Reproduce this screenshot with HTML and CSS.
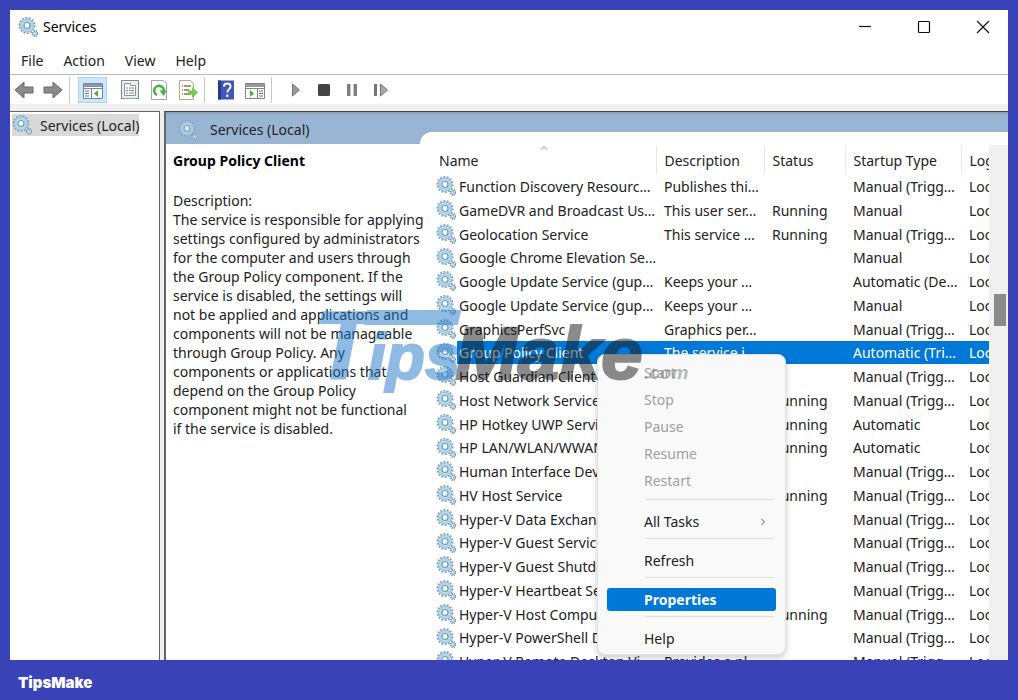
FILE: index.html
```
<!DOCTYPE html>
<html lang="en">
<head>
  <meta charset="UTF-8" />
  <meta name="viewport" content="width=device-width, initial-scale=1.0" />
  <title>Services</title>
  <link rel="stylesheet" href="styles.css">
</head>
<body>
  <!-- shared gear icon -->
  <svg class="defs" aria-hidden="true">
    <symbol id="gear" viewBox="0 0 20 20">
      <circle cx="9" cy="8.5" r="7.6" fill="none" stroke="#7f9db3" stroke-width="1.8" stroke-dasharray="1.9 1.5"/>
      <circle cx="9" cy="8.5" r="5" fill="none" stroke="#b4d6e8" stroke-width="4"/>
      <circle cx="9" cy="8.5" r="6.6" fill="none" stroke="#8db8d3" stroke-width="0.8"/>
      <circle cx="9" cy="8.5" r="3" fill="#fbfdfe" stroke="#6a9cc0" stroke-width="1.2"/>
      <circle cx="17" cy="16.5" r="2.6" fill="#d3e8f3" stroke="#7393aa" stroke-width="1.8" stroke-dasharray="1.2 0.9"/>
      <circle cx="17" cy="16.5" r="1.1" fill="#fff" stroke="#8db9d4" stroke-width="0.8"/>
    </symbol>
  </svg>

  <main class="window">
    <header class="titlebar">
      <svg class="gear"><use href="#gear"/></svg>
      <h1>Services</h1>
      <div class="controls">
        <button aria-label="Minimize"><svg viewBox="0 0 14 14"><path d="M1 6.500h12"/></svg></button>
        <button aria-label="Maximize"><svg viewBox="0 0 14 14"><rect x="1.5" y="1.5" width="11" height="11" rx="1"/></svg></button>
        <button aria-label="Close"><svg viewBox="0 0 14 14"><path d="M1 1l12 12M13 1L1 13"/></svg></button>
      </div>
    </header>

    <nav class="menubar">
      <button>File</button>
      <button>Action</button>
      <button>View</button>
      <button>Help</button>
    </nav>

    <div class="toolbar">
      <button class="tool" aria-label="Back"><svg viewBox="0 0 20 20"><path d="M1 10l9-8v5h9v6h-9v5z" fill="#8b8b8b" stroke="#666"/></svg></button>
      <button class="tool next" aria-label="Forward"><svg viewBox="0 0 20 20"><path d="M19 10l-9-8v5H1v6h9v5z" fill="#8b8b8b" stroke="#666"/></svg></button>
      <span class="divider"></span>
      <button class="tool active" aria-label="Show/Hide Console Tree">
        <svg viewBox="0 0 20 20"><path d="M.5 3.5h19v15H.5z" fill="#fff" stroke="#7b8794"/><path d="M1 4h18v3H1z" fill="#8b98a6"/><path d="M0 8.5h20M8.5 9v10" stroke="#7b8794"/><path d="M2 11h4M2 13.5h4M2 16h4" stroke="#5377a8"/><path d="M15 10v7l-4-3.500z" fill="#55a83a"/></svg>
      </button>
      <button class="tool" aria-label="Properties">
        <svg viewBox="0 0 20 20"><path d="M1.500.500h17v18h-17z" fill="#eee" stroke="#858585"/><path d="M4.500 3.500h6v2h5v10h-11z" fill="#fff" stroke="#8c96a0"/><path d="M6 8h2m1 0h5M6 10.500h2m1 0h5M6 13h2m1 0h5" stroke="#7f8d9c"/><path d="M4 18.500h12" stroke="#88a6b5"/></svg>
      </button>
      <button class="tool" aria-label="Refresh">
        <svg viewBox="0 0 20 20"><path d="M2.500.500h12l3 3v16h-15z" fill="#fff" stroke="#a8a8a8"/><path d="M8 15A4.800 4.800 0 1 1 14.800 11" fill="none" stroke="#4caf43" stroke-width="2.600"/><path d="M10.500 10.500h7.500l-3.500 5.500z" fill="#4caf43"/></svg>
      </button>
      <button class="tool" aria-label="Export List">
        <svg viewBox="0 0 20 20"><path d="M1.500.500h11l3 3v16h-14z" fill="#fffef5" stroke="#b2ad98"/><path d="M4 6h1m1 0h7M4 10h1m1 0h5M4 14h1m1 0h7" stroke="#77776b" stroke-width="1.400"/><path d="M10 10.500h4V7l6 5.500-6 5.500v-3.500h-4z" fill="#74cc45"/></svg>
      </button>
      <span class="divider wide"></span>
      <button class="tool" aria-label="Help">
        <svg viewBox="0 0 20 20"><path d="M2 .500h16v19H2z" fill="#3e58b8"/><path d="M2 .500h3v19H2z" fill="#263b88"/><path d="M8 6.500c0-4 6.500-4 6.500 0 0 3-3.200 2.500-3.200 6M11.300 14.500v2.500" fill="none" stroke="#fff" stroke-width="2"/></svg>
      </button>
      <button class="tool" aria-label="Show/Hide Action Pane">
        <svg viewBox="0 0 20 20"><path d="M.5 3.500h19v15H.5z" fill="#fff" stroke="#858585"/><path d="M1 4h18v3H1z" fill="#9a9a9a"/><path d="M0 8.500h20M12.500 9v10" stroke="#858585"/><path d="M14 11h4M14 13.500h4M14 16h4" stroke="#5377a8"/><path d="M5 10v7l4-3.500z" fill="#55a83a"/></svg>
      </button>
      <span class="divider"></span>
      <div class="playback">
        <button class="tool" aria-label="Start Service"><svg viewBox="0 0 20 20"><path d="M6.500 4v12l7-6z" fill="#999" stroke="#777"/></svg></button>
        <button class="tool" aria-label="Stop Service"><svg viewBox="0 0 20 20"><rect x="4" y="4" width="12" height="12" rx="1.500" fill="#444"/></svg></button>
        <button class="tool" aria-label="Pause Service"><svg viewBox="0 0 20 20"><path d="M5 4h3.500v12H5zM11.500 4H15v12h-3.500z" fill="#808080"/></svg></button>
        <button class="tool" aria-label="Restart Service"><svg viewBox="0 0 20 20"><path d="M4 4h3v12H4z" fill="#777"/><path d="M10.500 4v12l7-6z" fill="#aaa" stroke="#777"/></svg></button>
      </div>
    </div>

    <div class="panes">
      <aside class="tree">
        <a href="#services" class="tree-item"><svg class="gear"><use href="#gear"/></svg><span>Services (Local)</span></a>
      </aside>

      <section class="content" id="services">
        <div class="details">
          <div class="details-head"><svg class="gear"><use href="#gear"/></svg><span>Services (Local)</span></div>
          <div class="details-body">
            <h2>Group Policy Client</h2>
            <p>Description:<br>
              The service is responsible for applying<br>
              settings configured by administrators<br>
              for the computer and users through<br>
              the Group Policy component. If the<br>
              service is disabled, the settings will<br>
              not be applied and applications and<br>
              components will not be manageable<br>
              through Group Policy. Any<br>
              components or applications that<br>
              depend on the Group Policy<br>
              component might not be functional<br>
              if the service is disabled.</p>
          </div>
        </div>

        <div class="list">
          <table>
            <thead>
              <tr>
                <th class="col-name">Name<svg class="sort" viewBox="0 0 8 4"><path d="M1 3.500l3-3 3 3"/></svg></th>
                <th class="col-desc">Description</th>
                <th class="col-status">Status</th>
                <th class="col-startup">Startup Type</th>
                <th>Log</th>
              </tr>
            </thead>
            <tbody id="rows"></tbody>
          </table>
          <div class="scrollbar"><div class="thumb"></div></div>
        </div>
      </section>
    </div>

    <div class="context-menu">
      <button disabled>Start</button>
      <button disabled>Stop</button>
      <button disabled>Pause</button>
      <button disabled>Resume</button>
      <button disabled>Restart</button>
      <hr>
      <button>All Tasks<svg viewBox="0 0 6 8"><path d="M1.500 1l3 3-3 3"/></svg></button>
      <hr>
      <button>Refresh</button>
      <hr>
      <button class="selected">Properties</button>
      <hr>
      <button>Help</button>
    </div>
  </main>

  <svg class="watermark" viewBox="0 0 376 90">
    <g class="mark-blue">
      <text x="-8" y="74" font-size="96">T</text>
      <path d="M46 6h92l-3 13H43z"/>
      <text x="46" y="74" font-size="64">ips</text>
    </g>
    <g class="mark-gray">
      <text x="133" y="74" font-size="75">Make</text>
      <text class="mark-domain" x="322" y="74" font-size="19">.com</text>
    </g>
  </svg>

  <footer>TipsMake</footer>

  <script>
    const services = [
      ['Function Discovery Resourc…', 'Publishes thi…', '', 'Manual (Trigg…'],
      ['GameDVR and Broadcast Us…', 'This user ser…', 'Running', 'Manual'],
      ['Geolocation Service', 'This service …', 'Running', 'Manual (Trigg…'],
      ['Google Chrome Elevation Se…', '', '', 'Manual'],
      ['Google Update Service (gup…', 'Keeps your …', '', 'Automatic (De…'],
      ['Google Update Service (gup…', 'Keeps your …', '', 'Manual'],
      ['GraphicsPerfSvc', 'Graphics per…', '', 'Manual (Trigg…'],
      ['Group Policy Client', 'The service i…', '', 'Automatic (Tri…'],
      ['Host Guardian Client', '', '', 'Manual (Trigg…'],
      ['Host Network Service', '', 'Running', 'Manual (Trigg…'],
      ['HP Hotkey UWP Service', '', 'Running', 'Automatic'],
      ['HP LAN/WLAN/WWAN', '', 'Running', 'Automatic'],
      ['Human Interface Device', '', '', 'Manual (Trigg…'],
      ['HV Host Service', '', 'Running', 'Manual (Trigg…'],
      ['Hyper-V Data Exchange', '', '', 'Manual (Trigg…'],
      ['Hyper-V Guest Service', '', '', 'Manual (Trigg…'],
      ['Hyper-V Guest Shutdown', '', '', 'Manual (Trigg…'],
      ['Hyper-V Heartbeat Service', '', '', 'Manual (Trigg…'],
      ['Hyper-V Host Compute', '', 'Running', 'Manual (Trigg…'],
      ['Hyper-V PowerShell Direct', '', '', 'Manual (Trigg…'],
      ['Hyper-V Remote Desktop Vi…', 'Provides a pl…', '', 'Manual (Trigg…']
    ];
    const selected = 'Group Policy Client';

    document.getElementById('rows').innerHTML = services.map(([name, desc, status, startup]) => `
      <tr class="${name === selected ? 'selected' : ''}">
        <td><div class="name"><svg class="gear"><use href="#gear"/></svg><span>${name}</span></div></td>
        <td>${desc}</td>
        <td>${status}</td>
        <td>${startup}</td>
        <td>Loc</td>
      </tr>`).join('');
  </script>
</body>
</html>
```
FILE: styles.css
```
* {
  box-sizing: border-box;
}

body {
  margin: 0;
  height: 100vh;
  display: flex;
  flex-direction: column;
  padding: 10px 10px 0;
  background-color: #3943b7;
  color: #222;
  font-family: "Noto Sans", "Open Sans", sans-serif;
  font-size: 14px;
  line-height: 19px;
  position: relative;
  overflow: hidden;
}

button {
  border: none;
  background: none;
  padding: 0;
  font: inherit;
  color: inherit;
}

.defs {
  position: absolute;
  width: 0;
  height: 0;
}

.gear {
  width: 20px;
  height: 20px;
  flex: none;
}

.window {
  flex: 1;
  min-height: 0;
  display: flex;
  flex-direction: column;
  background-color: #fff;
  position: relative;
  overflow: hidden;
}

.titlebar {
  display: flex;
  align-items: center;
  height: 33px;
  padding-left: 8px;
  gap: 5px;
  color: #000;
}

.titlebar h1 {
  margin: 0;
  font-size: 14px;
  font-weight: normal;
}

.controls {
  display: flex;
  gap: 45px;
  margin-left: auto;
  padding-right: 18px;
}

.controls button,
.controls svg {
  display: block;
  width: 14px;
  height: 14px;
}

.controls svg {
  fill: none;
  stroke: #111;
  stroke-width: 1.2;
}

.menubar {
  display: flex;
  align-items: center;
  gap: 20px;
  height: 32px;
  padding: 4px 11px 0;
  border-bottom: 1px solid #b9b9b9;
}

.toolbar {
  display: flex;
  align-items: center;
  height: 29px;
  padding: 1px 4px 0;
}

.tool {
  width: 29px;
  height: 26px;
  display: flex;
  align-items: center;
  justify-content: flex-start;
  flex: none;
}

.tool svg {
  width: 20px;
  height: 20px;
}

.tool.next {
  width: 26px;
}

.tool.active {
  justify-content: center;
  margin-right: 13px;
  background-color: #cce8ff;
  border: 1px solid #a9d4f5;
}

.divider {
  width: 1px;
  height: 26px;
  margin-right: 8px;
  background-color: #c8c8c8;
}

.divider.wide {
  margin-right: 11px;
}

.tool + .divider {
  margin-left: -3px;
}

.next + .divider {
  margin-left: 0;
}

.playback {
  display: flex;
  padding-left: 6px;
}

.playback .tool {
  width: 28px;
}

.panes {
  flex: 1;
  min-height: 0;
  display: flex;
  gap: 4px;
  border-top: 7px solid #f0f0f0;
  background-color: #f0f0f0;
}

.tree {
  width: 150px;
  flex: none;
  padding: 2px;
  background-color: #fff;
  border-top: 1px solid #666;
  border-right: 1px solid #666;
}

.tree-item {
  display: inline-flex;
  align-items: center;
  gap: 8px;
  height: 22px;
  background-color: #d9d9d9;
  color: inherit;
  text-decoration: none;
}

.content {
  flex: 1;
  min-width: 0;
  display: flex;
  background-color: #9ab5d4;
  border-top: 1px solid #444;
  border-left: 2px solid #666;
  box-shadow: inset 0 2px #8fa4bc;
}

/* long lines run on over the list's left padding */
.details {
  width: 254px;
  flex: none;
  display: flex;
  flex-direction: column;
  position: relative;
  z-index: 1;
}

.details-head {
  display: flex;
  align-items: center;
  gap: 12px;
  height: 32px;
  padding: 3px 12px 0;
}

.details-head .gear {
  opacity: 0.7;
}

.details-body {
  flex: 1;
  padding: 7px 0 0 7px;
  background-color: #fff;
  white-space: nowrap;
}

.details-body h2 {
  margin: 0 0 21px;
  font-size: 14px;
  color: #000;
}

.details-body p {
  margin: 0;
}

.list {
  flex: 1;
  min-width: 0;
  display: flex;
  margin-top: 20px;
  background-color: #fff;
  border-top-left-radius: 12px;
  overflow: hidden;
}

table {
  flex: 1;
  min-width: 0;
  width: 100%;
  align-self: flex-start;
  table-layout: fixed;
  border-collapse: collapse;
  margin-top: 14px;
}

th,
td {
  padding: 0 0 0 8px;
  text-align: left;
  font-weight: normal;
  white-space: nowrap;
  overflow: hidden;
}

th {
  height: 28px;
  position: relative;
  border-right: 1px solid #e8e8e8;
}

th:first-child {
  padding-left: 19px;
}

th:last-child {
  border-right: none;
}

.col-name {
  width: 236px;
}

.col-desc {
  width: 108px;
}

.col-status {
  width: 81px;
}

.col-startup {
  width: 116px;
}

.sort {
  position: absolute;
  top: 0;
  left: 120px;
  width: 8px;
  height: 4px;
  fill: none;
  stroke: #888;
}

td {
  height: 24px;
}

/* every fourth row is a pixel shorter */
tbody tr:nth-child(4n) td {
  height: 23px;
}

td:first-child {
  padding-left: 16px;
}

.name {
  display: flex;
  align-items: center;
  gap: 1px;
  height: 23px;
}

.name span {
  flex: 1;
  padding: 2px;
}

.selected td {
  background-color: #0078d7;
  color: #fff;
}

.selected td:first-child {
  background: none;
}

.selected .name span {
  background-color: #0078d7;
}

.scrollbar {
  width: 19px;
  flex: none;
  margin-top: 13px;
  padding-top: 149px;
  background-color: #f0f0f0;
}

.thumb {
  width: 12px;
  height: 32px;
  margin-left: 5px;
  background-color: #8b8b8b;
}

.context-menu {
  position: absolute;
  top: 344px;
  left: 587px;
  width: 189px;
  padding: 4px 9px;
  background-color: #f9f9f9;
  border: 1px solid #e2e2e2;
  border-radius: 8px;
  box-shadow: 0 3px 6px rgba(0, 0, 0, 0.2);
  z-index: 2;
}

.context-menu button {
  display: flex;
  align-items: center;
  justify-content: space-between;
  width: 100%;
  height: 23px;
  padding: 0 10px 0 37px;
}

.context-menu button:disabled {
  height: 27px;
  color: #a0a0a0;
}

.context-menu svg {
  width: 6px;
  height: 8px;
  fill: none;
  stroke: #555;
}

.context-menu hr {
  margin: 5px 2px 10px 38px;
  border: none;
  border-top: 1px solid #dedede;
}

.context-menu .selected {
  background-color: #0078d7;
  border-radius: 3px;
  color: #fff;
  font-weight: bold;
}

.watermark {
  position: absolute;
  z-index: 3;
  top: 305px;
  left: calc(50% - 187px);
  width: 376px;
  height: 90px;
  overflow: visible;
  opacity: 0.5;
  pointer-events: none;
  font-family: "Liberation Sans", sans-serif;
  font-weight: bold;
  font-style: italic;
}

.mark-blue {
  fill: #1f78c8;
  stroke: #1f78c8;
  stroke-width: 2;
}

.mark-gray {
  fill: #1a1a1a;
  stroke: #1a1a1a;
  stroke-width: 2;
}

.mark-domain {
  fill: #777;
  stroke: none;
}

footer {
  height: 40px;
  padding: 13px 8px;
  color: #fff;
  font-family: Inter, sans-serif;
  font-size: 15px;
  font-weight: 900;
}
```
